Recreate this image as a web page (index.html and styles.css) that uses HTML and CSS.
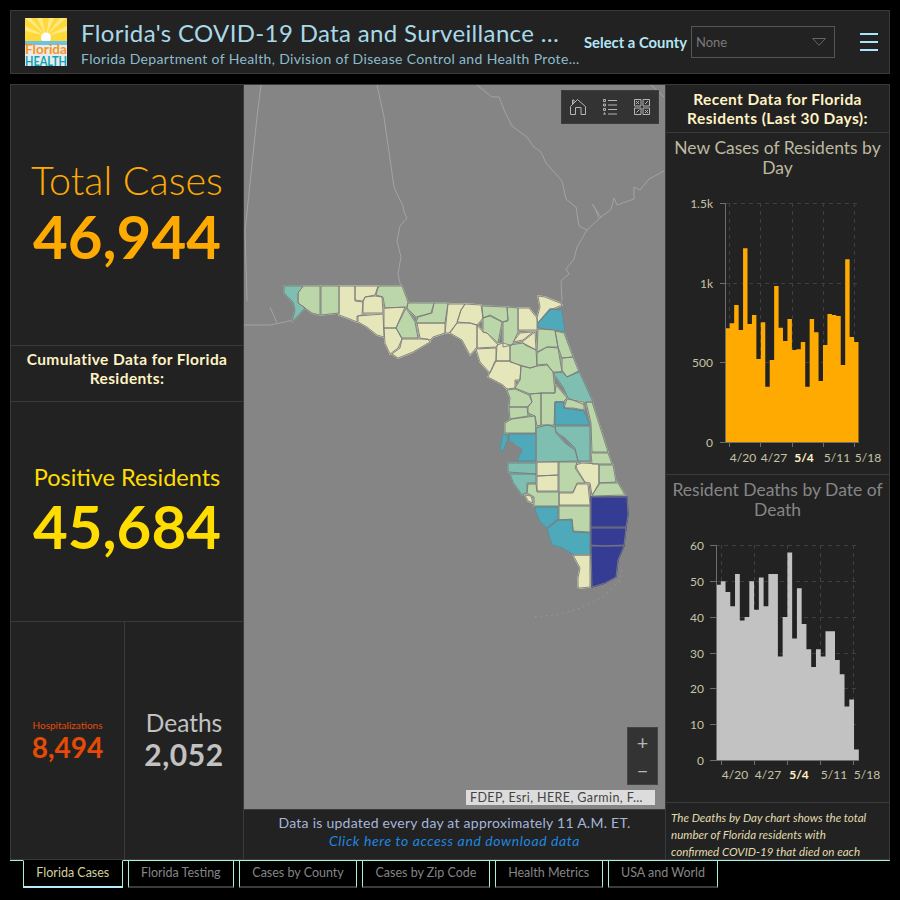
FILE: index.html
```html
<!DOCTYPE html>
<html lang="en">
<head>
<meta charset="utf-8">
<title>Florida's COVID-19 Data and Surveillance Dashboard</title>
<link rel="stylesheet" href="styles.css">
</head>
<body>
<div class="app">
  <header class="header">
    <svg class="logo" viewBox="0 0 42 48" width="42" height="48">
      <rect width="42" height="24" fill="#ffd83a"/>
      <path d="M21 18 L0 0 H6Z M21 18 L12 0 H17Z M21 18 L24 0 H29Z M21 18 L35 0 H41Z M21 18 L42 8 V13Z M21 18 L0 8 V13Z" fill="#ffe980"/>
      <circle cx="21" cy="19.500" r="5" fill="#fff"/>
      <rect y="23" width="42" height="4" fill="#6fc3dc"/>
      <rect y="27" width="42" height="21" fill="#eaeaea"/>
      <text class="logo-a" x="0" y="35.500" textLength="42" lengthAdjust="spacingAndGlyphs">Florida</text>
      <text class="logo-b" x="0" y="47.500" textLength="42" lengthAdjust="spacingAndGlyphs">HEALTH</text>
    </svg>
    <div class="titles">
      <div class="title">Florida's COVID-19 Data and Surveillance Dashboard</div>
      <div class="subtitle">Florida Department of Health, Division of Disease Control and Health Protection</div>
    </div>
    <div class="selector">
      <span class="selector-label">Select a County</span>
      <div class="select-box">
        <span>None</span>
        <svg width="14" height="8" viewBox="0 0 14 8"><path d="M.7.5h12.6L7 7.3z" fill="none" stroke="#666"/></svg>
      </div>
    </div>
    <div class="burger"><i></i><i></i><i></i></div>
  </header>

  <main class="board">
    <section class="left">
      <div class="stat stat-total">
        <div class="stat-label">Total Cases</div>
        <div class="stat-value">46,944</div>
      </div>
      <div class="cumulative">Cumulative Data for Florida Residents:</div>
      <div class="stat stat-positive">
        <div class="stat-label">Positive Residents</div>
        <div class="stat-value">45,684</div>
      </div>
      <div class="split">
        <div class="mini mini-hosp">
          <div class="mini-label">Hospitalizations</div>
          <div class="mini-value">8,494</div>
        </div>
        <div class="mini mini-deaths">
          <div class="mini-label">Deaths</div>
          <div class="mini-value">2,052</div>
        </div>
      </div>
    </section>

    <section class="center">
      <div class="map">
        <svg class="map-svg" viewBox="244 85 421 724" width="421" height="724">
          <g class="boundary">
            <path d="M261 85 L257 117 L251 174 L245 231 L247 301"/>
            <path d="M377 85 L384 117 L394 187 L399 198 L403 206 L404 212 L407 218 L400 226 L397 241 L401 257 L398 274 L400 283 L404 291"/>
            <path d="M477 85 L492 97 L499 97 L505 112 L512 126 L527 137 L533 146 L541 152 L546 163 L554 172 L562 181 L566 199 L576 207 L579 226 L587 230 L577 247 L574 259 L566 269 L569 274 L561 281 L562 301"/>
            <path d="M587 230 L601 217 L592 204 L594 206 L599 218 M601 217 L608 212 L611 209 L614 198 L617 205 L634 199 L634 187 L640 190 L649 179 L664 171"/>
            <path d="M651 85 L664 97"/>
            <path d="M244 325 L270 325 L285 322 L292 320 M270 307 L277 323"/>
          </g>
          <g class="county" id="counties">
            <polygon class="c3" points="284,286 303,286 298,293 298,303 305,308 292,322 295,310 293,302 284,293"/>
            <polygon class="c2" points="303,286 320,286 320,315 312,313 305,308 298,303 298,293"/>
            <polygon class="c2" points="321,286 339,286 339,313 321,315"/>
            <polygon class="c1" points="339,286 355,286 355,301 363,302 362,315 357,316 357,322 350,319 339,315"/>
            <polygon class="c1" points="355,286 378,286 375,295 365,297 363,301 355,300"/>
            <polygon class="c1" points="365,297 375,296 382,297 383,313 363,313 363,302"/>
            <polygon class="c1" points="358,316 383,314 384,337 377,335 367,327 358,322"/>
            <polygon class="c2" points="378,288 380,286 402,286 408,302 407,307 385,308 383,297 376,295"/>
            <polygon class="c1" points="384,308 405,307 396,328 384,328"/>
            <polygon class="c1" points="384,328 396,328 402,339 398,348 390,354 385,343"/>
            <polygon class="c2" points="406,308 415,322 418,338 402,338 396,328"/>
            <polygon class="c1" points="402,339 428,339 430,342 413,352 398,358 392,354 400,348"/>
            <polygon class="c2" points="408,303 434,303 431,313 416,317 407,308"/>
            <polygon class="c2" points="434,303 448,303 445,323 416,323 418,317 432,313"/>
            <polygon class="c1" points="417,323 445,323 445,333 433,337 430,340 420,338"/>
            <polygon class="c1" points="448,304 465,304 461,310 457,323 449,333 445,333"/>
            <polygon class="c1" points="465,304 481,305 483,318 477,325 470,323 457,322 461,310"/>
            <polygon class="c1" points="457,323 470,323 477,325 477,347 470,355 462,340 450,333"/>
            <polygon class="c2" points="482,306 507,307 508,320 503,322 490,315 483,318"/>
            <polygon class="c2" points="483,318 490,316 502,322 498,343 487,333 483,332"/>
            <polygon class="c2" points="507,307 518,308 518,332 512,345 503,347 503,322 508,321"/>
            <polygon class="c1" points="518,308 529,308 537,318 537,330 518,330"/>
            <polygon class="c1" points="538,296 545,297 560,303 562,305 550,310 538,323 537,318 540,307"/>
            <polygon class="c4" points="550,309 562,310 565,332 555,330 538,328 538,323"/>
            <polygon class="c1" points="513,342 520,333 533,332 523,340"/>
            <polygon class="c1" points="522,342 535,332 536,350 525,345"/>
            <polygon class="c2" points="538,329 555,330 558,347 547,347 537,352"/>
            <polygon class="c2" points="555,331 564,333 573,357 562,358 558,347"/>
            <polygon class="c2" points="537,353 547,347 558,348 562,372 553,372 547,364 537,365"/>
            <polygon class="c2" points="562,358 573,357 579,372 567,377 562,370"/>
            <polygon class="c3" points="553,373 562,372 567,377 579,371 593,402 585,402 585,405 568,398 563,387"/>
            <polygon class="c2" points="510,345 523,343 536,350 537,366 530,368 520,365 510,362"/>
            <polygon class="c1" points="497,345 503,343 510,345 510,361 496,361"/>
            <polygon class="c1" points="477,325 483,332 487,333 498,345 496,347 477,348"/>
            <polygon class="c1" points="476,349 496,348 496,361 490,373 480,362"/>
            <polygon class="c1" points="495,361 510,361 521,366 520,380 515,380 515,388 507,389 503,385 488,377"/>
            <polygon class="c2" points="521,366 530,368 537,366 547,365 553,372 555,393 542,393 530,394 515,388 520,380"/>
            <polygon class="c2" points="507,390 515,389 529,395 532,402 527,407 509,407 510,398"/>
            <polygon class="c2" points="509,407 527,407 528,416 510,419"/>
            <polygon class="c2" points="530,394 541,393 541,425 537,426 535,416 528,413 528,407 532,402"/>
            <polygon class="c2" points="541,393 555,393 556,385 567,398 563,402 555,402 554,425 541,425"/>
            <polygon class="c2" points="505,423 512,419 535,416 536,433 505,433"/>
            <polygon class="c2" points="564,408 567,399 584,402 584,410 573,408"/>
            <polygon class="c4" points="555,402 563,402 564,408 584,411 590,425 555,425"/>
            <polygon class="c2" points="586,402 592,402 601,430 608,452 592,452 591,423"/>
            <polygon class="c4" points="503,434 508,435 508,440 502,453 500,447"/>
            <polygon class="c4" points="509,434 536,434 536,461 517,461 522,450 509,445"/>
            <polygon class="c3" points="536,428 547,425 555,427 556,433 565,443 575,450 578,461 536,462"/>
            <polygon class="c3" points="555,426 590,426 590,461 578,461 575,448 565,438 556,432"/>
            <polygon class="c2" points="591,453 608,453 612,464 592,464"/>
            <polygon class="c3" points="508,463 536,463 536,474 508,472"/>
            <polygon class="c3" points="510,474 536,474 536,483 527,483 527,492 522,495 513,482"/>
            <polygon class="c1" points="537,462 558,462 558,475 537,476"/>
            <polygon class="c1" points="537,476 558,475 558,491 537,491"/>
            <polygon class="c2" points="559,462 577,462 575,468 585,483 577,483 573,492 559,492"/>
            <polygon class="c1" points="576,465 582,463 599,464 599,485 592,495 590,483 585,482 577,469"/>
            <polygon class="c2" points="599,465 613,465 616,482 599,483"/>
            <polygon class="c2" points="599,483 618,483 625,495 592,496"/>
            <polygon class="c1" points="559,493 573,493 577,484 588,484 590,505 559,505"/>
            <polygon class="c2" points="528,484 536,484 537,492 559,492 559,506 534,506 534,497 527,493"/>
            <polygon class="c1" points="525,495 531,496 533,503 528,501"/>
            <polygon class="c4" points="535,507 558,507 558,519 547,528 540,522 535,510"/>
            <polygon class="c2" points="559,506 590,506 590,532 573,531 572,519 559,520"/>
            <polygon class="c4" points="547,529 558,520 572,520 573,532 590,533 590,555 574,555 562,548 552,545"/>
            <polygon class="c1" points="573,555 590,555 590,587 580,588 578,587 578,578 580,568"/>
            <polygon class="c5" points="591,497 627,497 628,515 626,527 591,527"/>
            <polygon class="c5" points="591,528 626,528 624,545 603,546 591,545"/>
            <polygon class="c5" points="591,546 624,546 618,560 616,577 605,583 592,587"/>
          </g>
          <use href="#counties" class="county-lines"/>
          <polygon class="water" points="507,443 512,441 517,446 522,448 518,455 512,458 508,452"/>
          <path class="keys" d="M622 570 L619 582 L603 597 L583 607 L565 613 L553 615 L533 617"/>
        </svg>
        <div class="map-tools">
          <svg width="16" height="16" viewBox="0 0 16 16"><path d="M.5 15.500V7.500L7.500.5l8 7v8H11V8.500H5.500v7zM2.500 5.500V1h1.500v3" fill="none" stroke="#b5b5b5"/></svg>
          <svg width="14" height="16" viewBox="0 0 14 16"><path d="M5 1.500h9M5 6h9M5 10.500h9M5 15h9" stroke="#b5b5b5" fill="none"/><path d="M.5.5h2v2h-2zM.5 5h2v2h-2zM.5 9.500h2v2h-2z" fill="none" stroke="#b5b5b5"/><path d="M1.500 13l1.500 2.500H0z" fill="#b5b5b5"/></svg>
          <svg width="16" height="16" viewBox="0 0 16 16"><path d="M.5.500h6.500V7H.5zM9 .5h6.500V7H9zM.5 9h6.500v6.500H.5zM9 9h6.500v6.500H9z" fill="none" stroke="#b5b5b5"/><path d="M2 2l3 3M2 5l3-3M11 5l3-3M2.500 13.500l3-3M11 11l3 3M11 14l3-3" stroke="#b5b5b5" fill="none"/></svg>
        </div>
        <div class="zoom-tools"><span>+</span><span>−</span></div>
        <div class="attribution">FDEP, Esri, HERE, Garmin, F…</div>
      </div>
      <div class="notice">
        <div>Data is updated every day at approximately 11 A.M. ET.</div>
        <a class="notice-link">Click here to access and download data</a>
      </div>
    </section>

    <section class="right">
      <div class="right-head">Recent Data for Florida Residents (Last 30 Days):</div>
      <div class="chart chart-cases">
        <div class="chart-title title-cases">New Cases of Residents by Day</div>
        <svg class="chart-svg" viewBox="665 178 224 296" width="224" height="296">
          <path class="grid" d="M724 203.500H858M724 283.500H858M724 362.500H858M728.500 203V442M759.500 203V442M791.500 203V442M822.500 203V442M853.500 203V442"/>
          <path fill="#ffaa00" d="M724.300 442.300V328.300h4.440V323.300h4.440V305h4.440V330h4.440V248.300h4.440V324h4.440V315h4.440V359h4.440V322.300h4.440V386.700h4.440V360h4.440V286h4.440V327.700h4.440V341h4.440V319h4.440V350h4.440V349.300h4.440V342h4.440V386.700h4.440V319h4.440V332.300h4.440V381h4.440V345h4.440V314h4.440V315h4.440V316h4.440V365h4.440V259.300h4.440V337h4.440V342h4.440V442.300z"/>
          <path class="axis" d="M724.500 203V442.500M719 203.500H724.500M719 283.500H724.500M719 362.500H724.500M719 442.500H858M728.500 442.500V447M759.500 442.500V447M791.500 442.500V447M822.500 442.500V447M853.500 442.500V447"/>
          <g class="tick-y">
            <text x="712" y="208">1.5k</text>
            <text x="712" y="288">1k</text>
            <text x="712" y="367">500</text>
            <text x="712" y="447">0</text>
          </g>
          <g class="tick-x">
            <text x="742" y="462">4/20</text>
            <text x="773" y="462">4/27</text>
            <text class="tick-strong" x="803" y="462">5/4</text>
            <text x="836" y="462">5/11</text>
            <text x="867" y="462">5/18</text>
          </g>
        </svg>
      </div>
      <div class="chart chart-deaths">
        <div class="chart-title title-deaths">Resident Deaths by Date of Death</div>
        <svg class="chart-svg" viewBox="665 520 224 282" width="224" height="282">
          <path class="grid" d="M715 545.500H858M715 581.500H858M715 617.500H858M715 653.500H858M715 688.500H858M715 724.500H858M720.500 545V760M753.500 545V760M786.500 545V760M819.500 545V760M852.500 545V760"/>
          <path fill="#c2c2c2" d="M715 760.300V584.700h4.760V581.200h4.760V591.900h4.760V606.200h4.760V574h4.760V620.600h4.760V617h4.760V581.200h4.760V609.800h4.760V577.600h4.760V606.200h4.760V574h4.760V574h4.760V656.400h4.760V617h4.760V552.500h4.760V638.500h4.760V588.300h4.760V624.100h4.760V649.200h4.760V667.100h4.760V649.200h4.760V656.400h4.760V631.300h4.760V631.300h4.760V660h4.760V674.300h4.760V706.600h4.760V699.400h4.760V749.600h4.760V760.300z"/>
          <path class="axis" d="M715.500 545V760.500M709 545.500H715.500M709 581.500H715.500M709 617.500H715.500M709 653.500H715.500M709 688.500H715.500M709 724.500H715.500M709 760.500H858M720.500 760.500V765M753.500 760.500V765M786.500 760.500V765M819.500 760.500V765M852.500 760.500V765"/>
          <g class="tick-y">
            <text x="703" y="550">60</text>
            <text x="703" y="586">50</text>
            <text x="703" y="622">40</text>
            <text x="703" y="658">30</text>
            <text x="703" y="693">20</text>
            <text x="703" y="729">10</text>
            <text x="703" y="765">0</text>
          </g>
          <g class="tick-x">
            <text x="734" y="779">4/20</text>
            <text x="767" y="779">4/27</text>
            <text class="tick-strong" x="798" y="779">5/4</text>
            <text x="833" y="779">5/11</text>
            <text x="866" y="779">5/18</text>
          </g>
        </svg>
      </div>
      <div class="note">The Deaths by Day chart shows the total number of Florida residents with confirmed COVID-19 that died on each calendar day (12:00 AM - 11:59 PM).</div>
    </section>
  </main>

  <nav class="tabs">
    <span class="tab-lead"></span>
    <a class="tab tab-active">Florida Cases</a>
    <a class="tab">Florida Testing</a>
    <a class="tab">Cases by County</a>
    <a class="tab">Cases by Zip Code</a>
    <a class="tab">Health Metrics</a>
    <a class="tab">USA and World</a>
  </nav>
</div>
</body>
</html>
```

FILE: styles.css
```css
* { box-sizing: border-box; }
html, body { margin: 0; height: 100%; background: #000; }
body { font-family: Lato, "Open Sans", sans-serif; overflow: hidden; }

.app { width: 900px; height: 900px; padding: 10px 10px 0; display: flex; flex-direction: column; }

.header {
  height: 64px; flex: none; margin-bottom: 10px; background: #222; border: 1px solid #3a3a3a;
  display: flex; align-items: center; padding: 0 11px 0 14px;
}
.logo { flex: none; margin-right: 14px; }
.logo-a { font: 700 13px Lato, sans-serif; fill: #f7941e; }
.logo-b { font: 700 14px Lato, sans-serif; fill: #08a4b8; }
.titles { width: 499px; flex: none; padding-top: 2px; }
.title, .subtitle { white-space: nowrap; overflow: hidden; text-overflow: ellipsis; }
.title { width: 486px; font-size: 24px; line-height: 31px; font-weight: 400; color: #a8d9ea; letter-spacing: .35px; }
.subtitle { font-size: 14px; line-height: 21px; color: #8cbccc; letter-spacing: .35px; }
.selector { display: flex; align-items: center; margin-left: 4px; }
.selector-label { font-size: 14.800px; font-weight: 700; color: #b5e5f5; margin-right: 4px; white-space: nowrap; }
.select-box {
  width: 144px; height: 32px; border: 1px solid #555; display: flex; align-items: center;
  justify-content: space-between; padding: 0 8px 0 4px; font-size: 13px; color: #7a7a7a;
}
.burger { margin-left: 25px; width: 18px; display: flex; flex-direction: column; gap: 6px; }
.burger i { display: block; height: 2px; background: #a8e4fa; }

.board {
  height: 776px; flex: none; border: 1px solid #3a3a3a; background: #222;
  display: grid; grid-template-columns: 233px 421px 224px; overflow: hidden;
}
.left { border-right: 1px solid #3a3a3a; display: grid; grid-template-rows: 261px 56px 220px 1fr; }
.stat { display: flex; flex-direction: column; align-items: center; justify-content: center; text-align: center; }
.stat-total { color: #ffaa00; border-bottom: 1px solid #3a3a3a; padding-top: 58px; padding-bottom: 60px; }
.stat-total .stat-label { font-size: 39.500px; line-height: 44px; font-weight: 300; }
.stat-total .stat-value { font-size: 60px; line-height: 68px; font-weight: 700; }
.cumulative {
  border-bottom: 1px solid #3a3a3a; color: #fff3c4; font-size: 15.500px; line-height: 19px; font-weight: 700;
  text-align: center; padding: 4px 8px 0; letter-spacing: .4px;
}
.stat-positive { color: #ffdd00; border-bottom: 1px solid #3a3a3a; padding-bottom: 2px; }
.stat-positive .stat-label { font-size: 23.500px; line-height: 30px; font-weight: 400; }
.stat-positive .stat-value { font-size: 60px; line-height: 68px; font-weight: 700; }
.split { display: grid; grid-template-columns: 114px 1fr; }
.mini { display: flex; flex-direction: column; align-items: center; justify-content: center; }
.mini-hosp { color: #e64b06; border-right: 1px solid #3a3a3a; }
.mini-hosp .mini-label { font-size: 10px; line-height: 12px; }
.mini-hosp .mini-value { font-size: 28px; line-height: 32px; font-weight: 700; }
.mini-deaths { color: #c2c2c2; }
.mini-deaths .mini-label { font-size: 24.500px; line-height: 26px; font-weight: 400; }
.mini-deaths .mini-value { font-size: 30px; line-height: 36px; font-weight: 700; letter-spacing: .6px; }

.center { display: flex; flex-direction: column; min-height: 0; }
.map { position: relative; height: 725px; flex: none; background: #858585; border-bottom: 1px solid #3a3a3a; overflow: hidden; }
.map-svg { display: block; }
.boundary path { fill: none; stroke: #a3a3a3; stroke-width: 1; }
.county polygon { fill: var(--fill, currentColor); stroke: var(--line, currentColor); stroke-width: var(--weight, 1.4px); stroke-linejoin: round; }
.county-lines { --fill: none; --line: #7c7c7c; --weight: .9px; }
.c1 { color: #e6e6bb; }
.c2 { color: #bbd6a9; }
.c3 { color: #7fbfb1; }
.c4 { color: #4ea9ba; }
.c5 { color: #353c94; }
.water { fill: #858585; }
.keys { fill: none; stroke: #9c9c9c; stroke-width: 1; stroke-dasharray: 1.500 4; }
.map-tools {
  position: absolute; top: 5px; right: 6px; width: 98px; height: 34px; background: #333; border: 1px solid #3d3d3d;
  display: flex; align-items: center; gap: 17px; padding-left: 8px;
}
.zoom-tools {
  position: absolute; top: 642px; right: 7px; width: 31px; height: 58px; background: #333; border: 1px solid #444;
  display: flex; flex-direction: column; color: #b5b5b5; font-size: 20px; text-align: center;
}
.zoom-tools span { flex: 1; line-height: 28px; }
.attribution {
  position: absolute; top: 705px; right: 10px; width: 189px; height: 15px; background: #dcdcdc; color: #444;
  font-size: 12.500px; line-height: 15px; padding-left: 4px; letter-spacing: .4px; white-space: nowrap;
}
.notice { flex: 1; text-align: center; font-size: 14px; line-height: 18px; color: #a5b6da; padding-top: 4px; letter-spacing: .25px; }
.notice-link { color: #1f87e0; font-style: italic; letter-spacing: .6px; }

.right { border-left: 1px solid #3a3a3a; display: flex; flex-direction: column; min-height: 0; overflow: hidden; }
.right-head {
  height: 48px; flex: none; border-bottom: 1px solid #3a3a3a; color: #fff3c4; font-size: 15.500px; line-height: 19px;
  font-weight: 700; text-align: center; padding: 5px 14px 0; letter-spacing: .4px;
}
.chart { flex: none; border-bottom: 1px solid #3a3a3a; }
.chart-cases { height: 342px; }
.chart-deaths { height: 328px; }
.chart-title { height: 45px; padding: 5px 2px 0; text-align: center; font-size: 17.500px; line-height: 20px; }
.title-cases { color: #bdb9a0; }
.title-deaths { color: #868686; }
.chart-svg { display: block; }
.grid { fill: none; stroke: #3f3f3f; stroke-dasharray: 4 4; }
.axis { fill: none; stroke: #6e6e6e; }
.tick-y text { font-size: 12px; fill: #c6c2a6; text-anchor: end; }
.tick-x text { font-size: 12px; fill: #c6c2a6; text-anchor: middle; }
.tick-x .tick-strong { fill: #fff3c4; font-weight: 700; }
.note { flex: 1; min-height: 0; overflow: hidden; padding: 6px 20px 0 5px; font-size: 11.600px; line-height: 17px; font-style: italic; color: #e0dcae; }

.tabs { position: relative; height: 28px; flex: none; display: flex; align-items: stretch; gap: 5px; }
.tabs::before { content: ""; position: absolute; left: 113px; right: 0; top: 0; border-top: 1px solid #a5f2dd; }
.tab-lead { width: 13px; margin-right: -5px; border-top: 1px solid #a5f2dd; }
.tab {
  padding: 0 12.350px; border: 1px solid #a5f2dd; border-bottom: 2px solid #3a3a3a; font-size: 12.500px; line-height: 24px; color: #858585;
  white-space: nowrap;
}
.tab-active { border-top-color: transparent; border-bottom-color: #b5e9fb; color: #d2cf9f; }
```
